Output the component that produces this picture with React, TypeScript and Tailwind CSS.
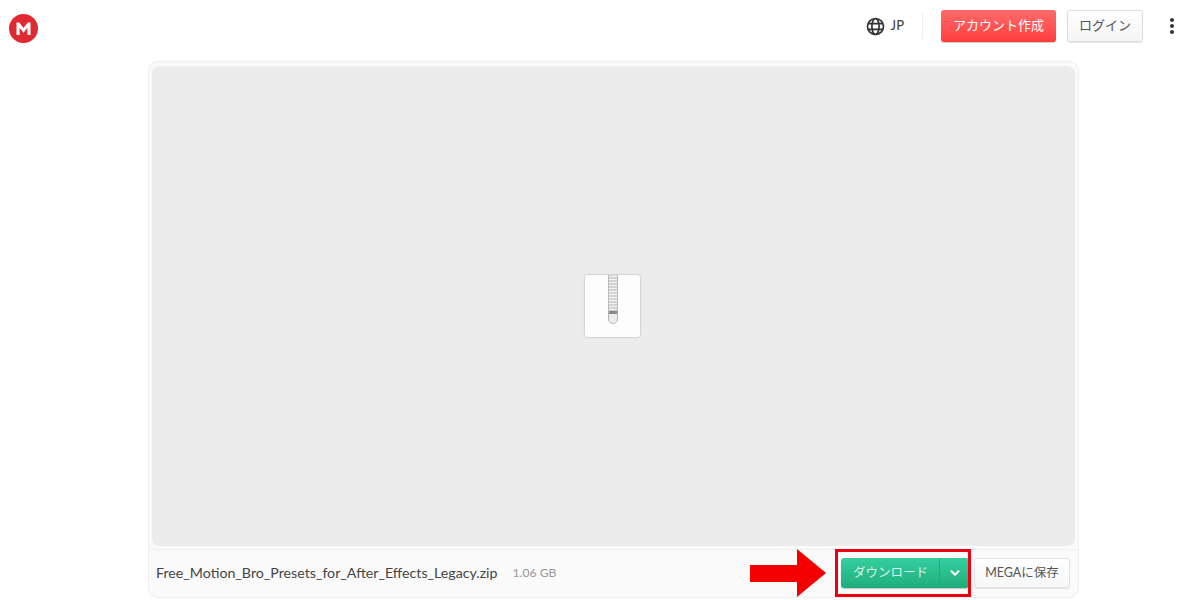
import { ChevronDown } from "lucide-react";

const lato = "font-['Lato','Noto_Sans_CJK_JP',sans-serif]";

function MegaLogo() {
  return (
    <svg width="30" height="30" viewBox="0 0 30 30">
      <circle cx="14.5" cy="14.5" r="14.5" fill="#df2a32" />
      <path
        d="M7.5 21V8.5h2.8l4.2 5.6 4.2-5.6h2.8V21h-3.1v-7.2l-3.9 5-3.9-5V21z"
        fill="#fff"
      />
    </svg>
  );
}

function Globe() {
  return (
    <svg width="19" height="19" viewBox="0 0 19 19" fill="none" stroke="#333" strokeWidth="1.7">
      <circle cx="9.5" cy="9.5" r="8" />
      <ellipse cx="9.5" cy="9.5" rx="3.6" ry="8" />
      <path d="M2 6.7h15M2 12.3h15" />
    </svg>
  );
}

function ZipIcon() {
  return (
    <div className="mr-[2px] flex h-[62px] w-[55px] justify-center rounded-[2px] bg-[#fdfdfd] shadow-[0_0_2px_rgba(0,0,0,0.35)]">
      <svg width="10" height="49" viewBox="0 0 10 49">
        <rect x="0.5" y="0" width="9" height="36" fill="#f2f2f2" stroke="#bdbdbd" />
        {[3, 6, 9, 12, 15, 18, 21, 24, 27, 30, 33].map((y) => (
          <path key={y} d="M0.5 0h9" transform={`translate(0 ${y})`} stroke="#b4b4b4" strokeWidth="1" />
        ))}
        <path d="M0.5 36h9v8a4.5 4.5 0 0 1-9 0z" fill="#ececec" stroke="#b5b5b5" />
        <rect x="1" y="36" width="8" height="3" fill="#8a8a8a" />
      </svg>
    </div>
  );
}

export default function App() {
  return (
    <div className={`${lato} relative h-[600px] w-[1200px] overflow-hidden bg-white`}>
      <header className="flex h-[61px] items-center pb-[9px] pl-[9px] pr-[26px]">
        <div className="mt-[5px]">
          <MegaLogo />
        </div>
        <div className="ml-auto flex items-center">
          <Globe />
          <span className="ml-[6px] text-[13px] font-medium text-[#444]">JP</span>
          <div className="ml-[18px] mr-[18px] h-[26px] w-px bg-[#efefef]" />
          <button className="h-[32px] w-[115px] rounded-[3px] bg-gradient-to-b from-[#ff6a6a] to-[#ff3b3b] text-[13px] text-white shadow-[0_1px_1px_rgba(0,0,0,0.2)]">
            アカウント作成
          </button>
          <button className="ml-[11px] h-[32px] w-[76px] rounded-[3px] border border-[#dcdcdc] bg-gradient-to-b from-white to-[#f5f5f5] text-[13px] text-[#555] shadow-[0_1px_1px_rgba(0,0,0,0.1)]">
            ログイン
          </button>
          <div className="ml-[27px] flex flex-col gap-[2px]">
            <span className="h-[4px] w-[4px] rounded-full bg-[#333]" />
            <span className="h-[4px] w-[4px] rounded-full bg-[#333]" />
            <span className="h-[4px] w-[4px] rounded-full bg-[#333]" />
          </div>
        </div>
      </header>

      <main className="ml-[148px] flex h-[537px] w-[931px] flex-col overflow-hidden rounded-[10px] border border-[#efefef] bg-[#fafafa]">
        <div className="mx-[3px] mt-[4px] flex h-[480px] items-center justify-center rounded-[8px] bg-[#ececec]">
          <ZipIcon />
        </div>
        <div className="mt-[3px] flex flex-1 items-center border-t border-[#f0f0f0] pb-[1px] pl-[7px] pr-[8px]">
          <span className="text-[14.2px] text-[#444]">Free_Motion_Bro_Presets_for_After_Effects_Legacy.zip</span>
          <span className="ml-[15px] text-[12.2px] text-[#999]">1.06 GB</span>
          <div className="ml-auto flex items-center gap-[5px]">
            <div className="flex h-[30px] w-[128px] overflow-hidden rounded-[3px] bg-gradient-to-b from-[#35cf9f] to-[#1fae7b] text-white shadow-[0_1px_1px_rgba(0,0,0,0.2)]">
              <button className="flex-1 pl-[1px] text-[12.5px] text-[#d8f5ea]">ダウンロード</button>
              <span className="flex w-[30px] items-center justify-center border-l border-[#2aa67e]">
                <ChevronDown size={14} strokeWidth={3.5} />
              </span>
            </div>
            <button className="h-[30px] w-[96px] rounded-[3px] border border-[#e2e2e2] bg-gradient-to-b from-white to-[#f7f7f7] text-[12.5px] text-[#555] shadow-[0_1px_1px_rgba(0,0,0,0.1)]">
              MEGAに保存
            </button>
          </div>
        </div>
      </main>

      {/* red annotation laid over the page */}
      <svg className="absolute left-[750px] top-[549px]" width="78" height="48" viewBox="0 0 78 48">
        <path d="M0 16h47V0l29 24-29 24V33H0z" fill="#f40000" />
      </svg>
      <div className="absolute left-[835px] top-[549px] h-[48px] w-[136px] border-[3px] border-[#ee0010]" />
    </div>
  );
}
